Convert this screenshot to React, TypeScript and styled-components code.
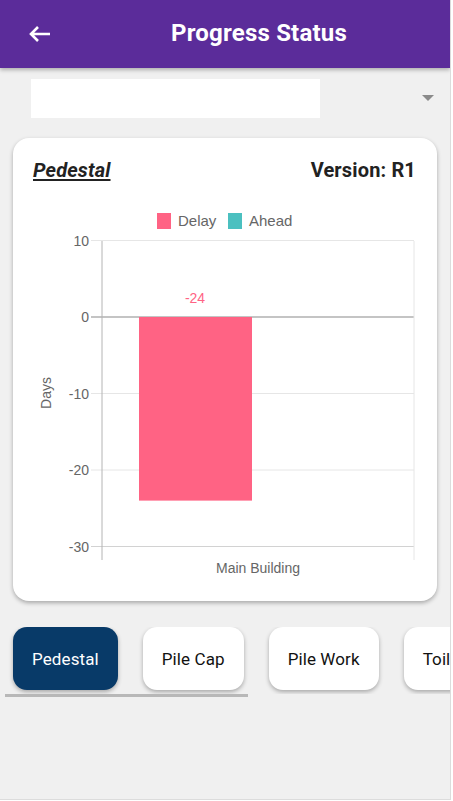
import React from 'react';
import styled, { createGlobalStyle } from 'styled-components';

const GlobalStyle = createGlobalStyle`
  html, body {
    margin: 0;
    padding: 0;
    background: #ffffff;
  }
  * {
    box-sizing: border-box;
  }
`;

const Screen = styled.div`
  width: 451px;
  height: 800px;
  background: #f0f0f0;
  border-right: 1px solid #dcdcdc;
  border-bottom: 1px solid #dcdcdc;
  font-family: Roboto, 'Liberation Sans', sans-serif;
  overflow: hidden;
  display: flex;
  flex-direction: column;
`;

const Header = styled.header`
  height: 68px;
  flex-shrink: 0;
  background: #5b2c9a;
  box-shadow: 0 2px 4px rgba(0, 0, 0, 0.28);
  display: flex;
  align-items: center;
  position: relative;
  z-index: 1;
`;

const BackButton = styled.button`
  width: 68px;
  height: 68px;
  border: none;
  background: transparent;
  padding: 0 0 0 28px;
  display: flex;
  align-items: center;
  cursor: pointer;
`;

const Title = styled.h1`
  flex: 1;
  margin: 0;
  text-align: center;
  color: #ffffff;
  font-size: 24px;
  font-weight: 700;
  letter-spacing: 0.2px;
  padding-bottom: 2px;
`;

const SelectRow = styled.div`
  height: 56px;
  display: flex;
  align-items: center;
  justify-content: space-between;
  padding: 4px 16px 0 31px;
`;

const SelectValue = styled.div`
  width: 289px;
  height: 39px;
  background: #ffffff;
`;

const Caret = styled.div`
  width: 0;
  height: 0;
  border-left: 6px solid transparent;
  border-right: 6px solid transparent;
  border-top: 6px solid #8a8a8a;
`;

const Card = styled.section`
  margin: 14px 13px 0 13px;
  height: 463px;
  background: #ffffff;
  border-radius: 16px;
  box-shadow: 0 2px 4px rgba(0, 0, 0, 0.3);
  padding: 20px 21px 0 20px;
  display: flex;
  flex-direction: column;
`;

const CardHead = styled.div`
  display: flex;
  justify-content: space-between;
  align-items: center;
  height: 24px;
  color: #222222;
  font-size: 20px;
  font-weight: 700;
  letter-spacing: 0.15px;
`;

const ActivityName = styled.span`
  font-style: italic;
  text-decoration: underline;
  text-underline-offset: 2px;
`;

const ChartSvg = styled.svg`
  display: block;
  margin-top: 18px;
  font-family: 'Liberation Sans', Arial, sans-serif;
`;

const ChipStrip = styled.div`
  margin-top: 26px;
  display: flex;
  flex-direction: column;
`;

const ChipRow = styled.div`
  display: flex;
  gap: 25px;
  padding: 0 0 4px 13px;
  overflow: hidden;
`;

const Chip = styled.button<{ active?: boolean }>`
  flex-shrink: 0;
  height: 63px;
  padding: 0 19px;
  border: none;
  border-radius: 14px;
  font-family: Roboto, 'Liberation Sans', sans-serif;
  font-size: 17px;
  letter-spacing: 0.1px;
  color: ${(p) => (p.active ? '#ffffff' : '#111111')};
  background: ${(p) => (p.active ? '#083a68' : '#ffffff')};
  box-shadow: 0 2px 4px rgba(0, 0, 0, 0.3);
`;

const ScrollThumb = styled.div`
  margin-left: 5px;
  width: 243px;
  height: 3px;
  background: #b8b8b8;
`;

const PINK = '#ff6384';
const TEAL = '#4bc0c0';
const TICK = '#666666';

// y = 0 sits at 317, each 10 days is 76.5px
const yFor = (v: number) => 317 - v * 7.65;

const ticks = [10, 0, -10, -20, -30];

const DelayChart: React.FC<{ delay: number }> = ({ delay }) => (
  <ChartSvg width={384} height={385} viewBox="33 200 384 385">
    <rect x={157} y={213} width={14} height={16} fill={PINK} />
    <text x={178} y={226} fontSize={15} fill={TICK}>
      Delay
    </text>
    <rect x={228} y={213} width={14} height={16} fill={TEAL} />
    <text x={249} y={226} fontSize={15} fill={TICK}>
      Ahead
    </text>

    {ticks.map((t) => {
      const y = yFor(t);
      const dark = t === 0;
      const bottom = t === -30;
      return (
        <g key={t}>
          <line
            x1={91}
            x2={414}
            y1={y}
            y2={y}
            stroke={dark ? '#c4c4c4' : bottom ? '#d2d2d2' : '#e6e6e6'}
            strokeWidth={dark ? 2 : 1}
          />
          <text x={89} y={y + 5} fontSize={14} fill={TICK} textAnchor="end">
            {t}
          </text>
        </g>
      );
    })}

    <line x1={102} x2={102} y1={241} y2={560} stroke="#b4b4b4" />
    <line x1={414} x2={414} y1={241} y2={560} stroke="#e6e6e6" />

    <rect x={139} y={317} width={113} height={yFor(delay) - 317} fill={PINK} />
    <text x={195} y={303} fontSize={14} fill={PINK} textAnchor="middle">
      {delay}
    </text>

    <text x={258} y={573} fontSize={14} fill={TICK} textAnchor="middle">
      Main Building
    </text>
    <text
      x={0}
      y={0}
      fontSize={14}
      fill={TICK}
      textAnchor="middle"
      transform="translate(51 393) rotate(-90)"
    >
      Days
    </text>
  </ChartSvg>
);

const activities = ['Pedestal', 'Pile Cap', 'Pile Work', 'Toilet Block'];

const App: React.FC = () => {
  return (
    <>
      <GlobalStyle />
      <Screen>
        <Header>
          <BackButton aria-label="Back">
            <svg width={24} height={18} viewBox="0 0 24 18">
              <path
                d="M22 9H3M10 2 3 9l7 7"
                fill="none"
                stroke="#ffffff"
                strokeWidth={2.6}
                strokeLinecap="butt"
              />
            </svg>
          </BackButton>
          <Title>Progress Status</Title>
        </Header>

        <SelectRow>
          <SelectValue />
          <Caret />
        </SelectRow>

        <Card>
          <CardHead>
            <ActivityName>Pedestal</ActivityName>
            <span>Version: R1</span>
          </CardHead>
          <DelayChart delay={-24} />
        </Card>

        <ChipStrip>
          <ChipRow>
            {activities.map((a, i) => (
              <Chip key={a} active={i === 0}>
                {a}
              </Chip>
            ))}
          </ChipRow>
          <ScrollThumb />
        </ChipStrip>
      </Screen>
    </>
  );
};

export default App;
